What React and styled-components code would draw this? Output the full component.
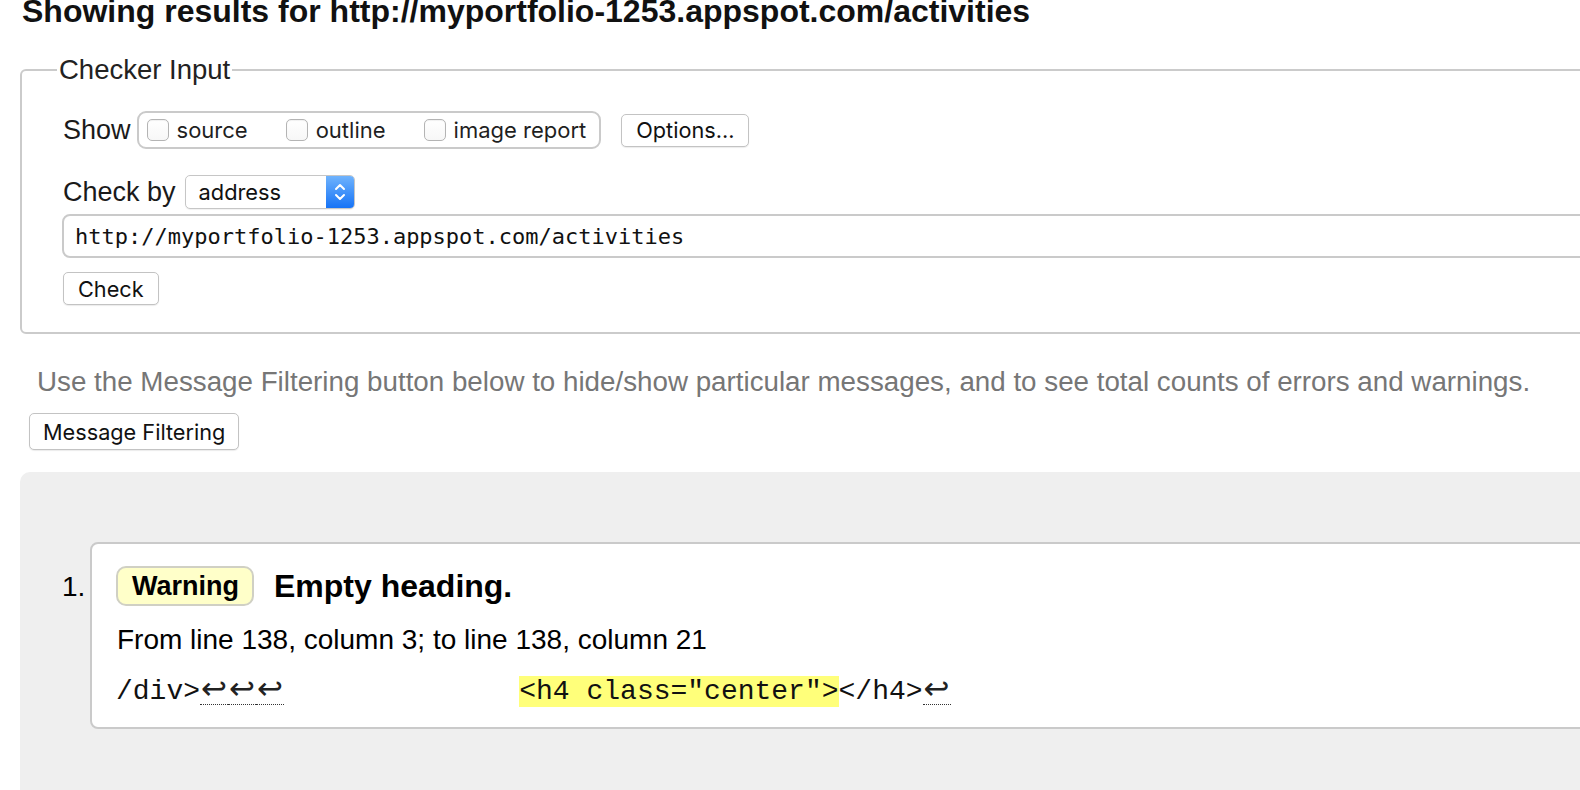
import React from 'react'
import styled, { createGlobalStyle } from 'styled-components'

const GlobalStyle = createGlobalStyle`
  html, body {
    margin: 0;
    padding: 0;
    width: 1580px;
    height: 790px;
    overflow: hidden;
    background: #fff;
  }
  body {
    font-family: "Liberation Sans", Arial, sans-serif;
    color: #000;
  }
`

const Page = styled.div`
  width: 1720px;
  padding-left: 20px;
  box-sizing: border-box;
`

const Title = styled.h2`
  margin: -5px 0 0 2px;
  font-size: 32px;
  line-height: 32px;
  font-weight: 700;
  color: #111;
`

const Fieldset = styled.fieldset`
  margin: 28px 0 0 0;
  padding: 0 0 27px 41px;
  border: 2px solid #cbcbcb;
  border-radius: 6px;
  min-width: 0;
`

const Legend = styled.legend`
  margin-left: -6px;
  padding: 0 2px;
  font-size: 27.5px;
  line-height: 30px;
  color: #222;
`

const Row = styled.div`
  display: flex;
  align-items: center;
  margin-top: ${({ $mt }) => $mt}px;
`

const Label = styled.span`
  font-size: 27px;
  color: #1a1a1a;
  margin-right: ${({ $gap }) => $gap}px;
`

const CheckGroup = styled.div`
  display: flex;
  align-items: center;
  box-sizing: border-box;
  height: 38px;
  padding: 0 13px 0 8px;
  border: 2px solid #cacaca;
  border-radius: 9px;
  gap: 38px;
`

const CheckItem = styled.label`
  display: flex;
  align-items: center;
  gap: 8px;
  font-family: Inter, "Liberation Sans", sans-serif;
  font-size: 22px;
  color: #1f1f1f;
`

const Box = styled.span`
  display: inline-block;
  width: 22px;
  height: 22px;
  box-sizing: border-box;
  border: 1px solid #b4b4b4;
  border-radius: 5px;
  background: linear-gradient(#ffffff, #f7f7f7);
  box-shadow: inset 0 1px 1px rgba(0, 0, 0, 0.06);
`

const Button = styled.button`
  display: block;
  box-sizing: border-box;
  height: ${({ $h }) => $h || 33}px;
  padding: 0 ${({ $px }) => $px || 14}px;
  margin: ${({ $mt }) => $mt || 0}px 0 0 ${({ $ml }) => $ml || 0}px;
  border: 1px solid #c3c3c3;
  border-radius: 5px;
  background: #fff;
  box-shadow: 0 1px 1px rgba(0, 0, 0, 0.08);
  font-family: Inter, "Liberation Sans", sans-serif;
  font-size: 21.7px;
  color: #111;
`

const Select = styled.div`
  display: flex;
  align-items: stretch;
  box-sizing: border-box;
  width: 170px;
  height: 34px;
  border: 1px solid #c6c6c6;
  border-radius: 5px;
  background: #fff;
  overflow: hidden;
  box-shadow: 0 1px 1px rgba(0, 0, 0, 0.06);
`

const SelectText = styled.span`
  flex: 1;
  display: flex;
  align-items: center;
  padding-left: 13px;
  font-family: Inter, "Liberation Sans", sans-serif;
  font-size: 21.8px;
  color: #111;
`

const SelectArrow = styled.span`
  width: 28px;
  display: flex;
  align-items: center;
  justify-content: center;
  background: linear-gradient(#6fb3fd, #1673f6);
`

const UrlInput = styled.div`
  box-sizing: border-box;
  margin-left: -1px;
  width: 1620px;
  height: 44px;
  padding-left: 11px;
  display: flex;
  align-items: center;
  border: 2px solid #cacaca;
  border-radius: 8px;
  font-family: "DejaVu Sans Mono", monospace;
  font-size: 22px;
  color: #111;
`

const Info = styled.p`
  margin: 32px 0 0 17px;
  font-size: 27.75px;
  line-height: 32px;
  color: #767676;
  white-space: nowrap;
`

const Results = styled.div`
  margin-top: 22px;
  height: 330px;
  background: #efefef;
  border-top-left-radius: 10px;
  padding: 70px 0 0 42px;
  box-sizing: border-box;
  display: flex;
  align-items: flex-start;
`

const Num = styled.span`
  width: 28px;
  margin-top: 28px;
  font-size: 28px;
  line-height: 34px;
`

const Card = styled.div`
  flex: 1;
  box-sizing: border-box;
  height: 187px;
  padding: 22px 0 0 24px;
  border: 2px solid #cacaca;
  border-radius: 8px;
  background: #fff;
`

const Heading = styled.div`
  display: flex;
  align-items: center;
  gap: 20px;
`

const Badge = styled.span`
  box-sizing: border-box;
  height: 40px;
  padding: 0 13px 0 14px;
  display: flex;
  align-items: center;
  border: 2px solid #d0d0c4;
  border-radius: 10px;
  background: #ffffc9;
  font-size: 27px;
  font-weight: 700;
`

const HeadText = styled.strong`
  font-size: 32px;
  font-weight: 700;
`

const Location = styled.p`
  margin: 17px 0 0 1px;
  font-size: 28px;
  line-height: 34px;
`

const Extract = styled.pre`
  margin: 16px 0 0 0;
  font-family: "Liberation Mono", "Courier New", monospace;
  font-size: 28px;
  line-height: 32px;
  color: #111;
`

const Lf = styled.span`
  display: inline-block;
  width: 28px;
  text-align: center;
  font-family: "DejaVu Sans", sans-serif;
  font-size: 31px;
  line-height: 31px;
  color: #222;
  border-bottom: 1px dotted #333;
`

const Mark = styled.mark`
  background: #ffff7a;
  color: #111;
`

const Chevrons = () => (
  <svg width="12" height="22" viewBox="0 0 12 22" fill="none" stroke="#fff" strokeWidth="2" strokeLinecap="round" strokeLinejoin="round">
    <path d="M2 8 L6 4 L10 8" />
    <path d="M2 14 L6 18 L10 14" />
  </svg>
)

export default function App() {
  return (
    <>
      <GlobalStyle />
      <Page>
        <Title>Showing results for http://myportfolio-1253.appspot.com/activities</Title>
        <Fieldset>
          <Legend>Checker Input</Legend>
          <Row $mt={26}>
            <Label $gap={6}>Show</Label>
            <CheckGroup>
              <CheckItem><Box />source</CheckItem>
              <CheckItem><Box />outline</CheckItem>
              <CheckItem><Box />image report</CheckItem>
            </CheckGroup>
            <Button $ml={20} $px={14}>Options...</Button>
          </Row>
          <Row $mt={26}>
            <Label $gap={9}>Check by</Label>
            <Select>
              <SelectText>address</SelectText>
              <SelectArrow><Chevrons /></SelectArrow>
            </Select>
          </Row>
          <Row $mt={5}>
            <UrlInput>http://myportfolio-1253.appspot.com/activities</UrlInput>
          </Row>
          <Row $mt={14}>
            <Button $px={14}>Check</Button>
          </Row>
        </Fieldset>
        <Info>Use the Message Filtering button below to hide/show particular messages, and to see total counts of errors and warnings.</Info>
        <Button $h={37} $ml={9} $mt={15} $px={13}>Message Filtering</Button>
        <Results>
          <Num>1.</Num>
          <Card>
            <Heading>
              <Badge>Warning</Badge>
              <HeadText>Empty heading.</HeadText>
            </Heading>
            <Location>From line 138, column 3; to line 138, column 21</Location>
            <Extract>/div&gt;<Lf>↩</Lf><Lf>↩</Lf><Lf>↩</Lf>{'              '}<Mark>&lt;h4 class="center"&gt;</Mark>&lt;/h4&gt;<Lf>↩</Lf></Extract>
          </Card>
        </Results>
      </Page>
    </>
  )
}
